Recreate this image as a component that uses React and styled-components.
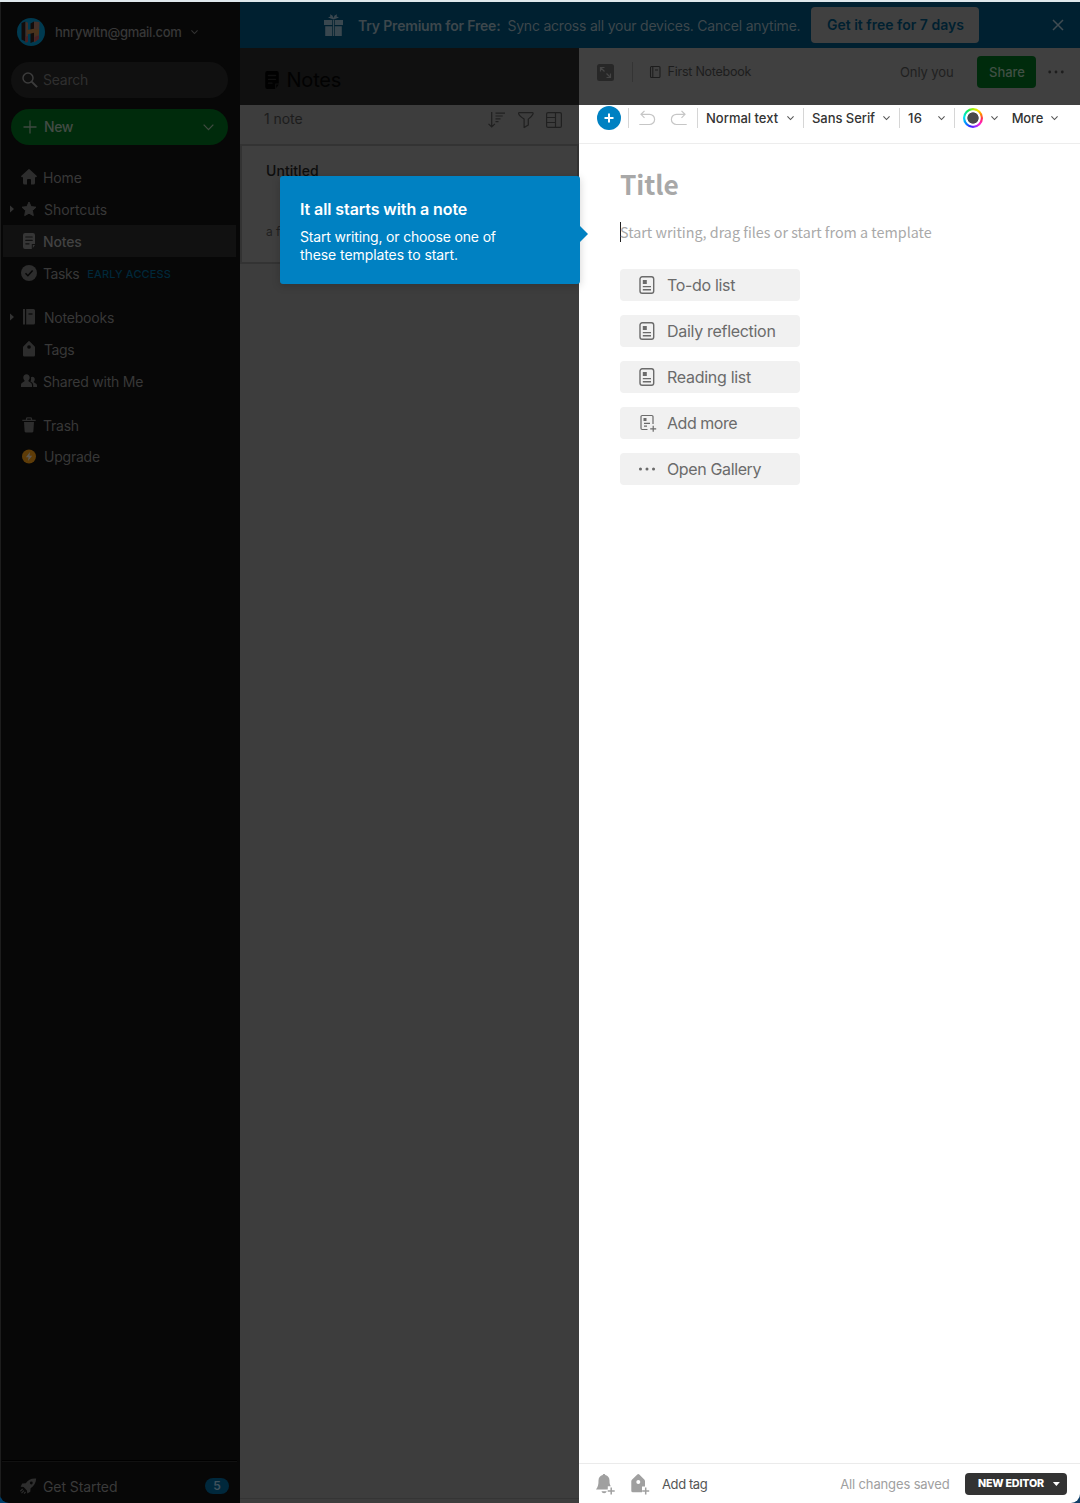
import React from "react";
import styled, { createGlobalStyle } from "styled-components";

const Global = createGlobalStyle`
  * { box-sizing: border-box; }
  body { margin: 0; font-family: Inter, "Liberation Sans", sans-serif; }
`;

const Text = styled.span`
  display: block;
  flex: none;
  font-family: Inter, "Liberation Sans", sans-serif;
  font-size: ${(p) => p.$size || 14}px;
  font-weight: ${(p) => p.$weight || 400};
  line-height: ${(p) => p.$line || 18}px;
  letter-spacing: ${(p) => p.$ls || 0}px;
  color: ${(p) => p.$color || "#3a3a3a"};
  white-space: pre;
`;

const Icon = styled.svg`
  display: block;
  flex: none;
  width: ${(p) => p.$w || 16}px;
  height: ${(p) => p.$h || p.$w || 16}px;
  overflow: visible;
`;

/* ---------- window ---------- */
const Desktop = styled.div`
  width: 1080px;
  height: 1503px;
  background: linear-gradient(90deg, #003f6b 50%, #103f68 50%);
`;
const Window = styled.div`
  display: flex;
  height: 100%;
  border-top: 2px solid #dfe8ec;
  border-radius: 0 0 9px 9px;
  overflow: hidden;
  position: relative;
`;

/* ---------- sidebar ---------- */
const Sidebar = styled.aside`
  display: flex;
  flex-direction: column;
  width: 240px;
  flex: none;
  background: #070707;
  border-left: 1px solid #1d1d1d;
`;
const Account = styled.div`
  display: flex;
  align-items: center;
  height: 60px;
  padding: 0 0 0 16px;
`;
const AccountName = styled(Text)`
  margin: 0 9px 0 10px;
`;
const Pill = styled.div`
  display: flex;
  align-items: center;
  width: 217px;
  height: 36px;
  margin: 0 0 ${(p) => p.$gap}px 10px;
  padding: 0 14px 0 11px;
  border-radius: 18px;
  background: ${(p) => p.$bg};
`;
const PillLabel = styled(Text)`
  flex: 1;
  margin-left: ${(p) => p.$ml}px;
`;
const NavGroup = styled.nav`
  display: flex;
  flex-direction: column;
  margin: 0 4px 12px 2px;
`;
const NavRow = styled.div`
  display: flex;
  align-items: center;
  height: ${(p) => p.$h || 32}px;
  padding-left: 6.5px;
  background: ${(p) => (p.$active ? "#111" : "transparent")};
`;
const Disclosure = styled.span`
  width: 4.5px;
  height: 8px;
  flex: none;
  background: ${(p) => (p.$show ? "#333" : "transparent")};
  clip-path: polygon(0 0, 100% 50%, 0 100%);
  margin-right: 7px;
`;
const NavLabel = styled(Text)`
  margin-left: ${(p) => p.$ml || 6}px;
  padding-top: 2px;
`;
const SideFooter = styled.div`
  display: flex;
  align-items: center;
  height: 43px;
  margin: auto 3px 0 1px;
  padding: 7px 8px 0 17px;
  border-top: 1px solid #000;
  box-shadow: inset 0 1px 0 #111;
`;
const Badge = styled.div`
  display: flex;
  align-items: center;
  justify-content: center;
  width: 24px;
  height: 16px;
  margin-left: auto;
  border-radius: 8px;
  background: #00283c;
`;

/* ---------- right side ---------- */
const Main = styled.div`
  display: flex;
  flex-direction: column;
  flex: 1;
`;
const Banner = styled.div`
  display: flex;
  align-items: center;
  height: 46px;
  flex: none;
  padding: 0 16px 0 84px;
  background: #002030;
`;
const BannerLead = styled(Text)`
  margin: 2px 7px 0 15px;
`;
const BannerText = styled(Text)`
  width: 293px;
  margin: 2px 11px 0 0;
`;
const Trial = styled.button`
  display: flex;
  align-items: center;
  justify-content: center;
  width: 168px;
  height: 36px;
  padding: 0;
  border: 0;
  border-radius: 4px;
  background: #404040;
`;
const CloseWrap = styled.div`
  margin-left: auto;
`;
const Panes = styled.div`
  display: flex;
  flex: 1;
`;

/* ---------- note list ---------- */
const ListPane = styled.section`
  display: flex;
  flex-direction: column;
  width: 339px;
  background: #3d3d3d;
`;
const ListHeader = styled.header`
  display: flex;
  align-items: center;
  height: 57px;
  padding: 7px 0 0 23px;
  background: #101010;
`;
const ListTitle = styled(Text)`
  margin: 0 0 0 5.5px;
`;
const ListBar = styled.div`
  display: flex;
  align-items: center;
  height: 39px;
  padding: 0 17px 9px 24px;
`;
const ListCount = styled(Text)`
  padding-bottom: 2px;
`;
const ListTools = styled.div`
  display: flex;
  align-items: center;
  gap: 12.5px;
  margin-left: auto;
`;
const Card = styled.article`
  display: flex;
  flex-direction: column;
  justify-content: space-between;
  height: 120px;
  padding: 16px 24px 21px;
  border: 2px solid #333;
  background: #3f3f3f;
`;
const ListEnd = styled.div`
  height: 5px;
  margin-top: auto;
  border-top: 1px solid #353535;
`;

/* ---------- editor ---------- */
const Editor = styled.section`
  display: flex;
  flex-direction: column;
  flex: 1;
  background: #fff;
`;
const EditorHeader = styled.header`
  display: flex;
  align-items: center;
  height: 57px;
  padding: 0 16px 9px 18px;
  background: #404040;
`;
const Divider = styled.span`
  width: 1px;
  height: 20px;
  margin: 0 17px 0 18px;
  background: #343434;
`;
const Share = styled.button`
  display: flex;
  align-items: center;
  justify-content: center;
  width: 59px;
  height: 32px;
  margin: 0 12px 0 23.5px;
  padding: 0 0 0 1px;
  border: 0;
  border-radius: 4px;
  background: #002b0c;
`;
const NotebookName = styled(Text)`
  flex: 1;
  margin-left: 6.5px;
`;
const Toolbar = styled.div`
  display: flex;
  align-items: flex-start;
  height: 39px;
  padding: 1px 0 0 18px;
  border-bottom: 1px solid #ededed;
`;
const AddButton = styled.div`
  display: flex;
  align-items: center;
  justify-content: center;
  width: 24px;
  height: 24px;
  margin-right: 7px;
  border-radius: 50%;
  background: #0081c2;
`;
const ToolGroup = styled.div`
  display: flex;
  align-items: center;
  justify-content: space-between;
  width: ${(p) => p.$w}px;
  height: 20px;
  margin-top: 2px;
  padding: 0 ${(p) => p.$pr || 9}px 0 ${(p) => p.$pl || 8}px;
  border-left: 1px solid #d6d6d6;
`;
const ColorWheel = styled.span`
  display: flex;
  width: 20px;
  height: 20px;
  border-radius: 50%;
  background: radial-gradient(circle, #4a4a4a 0 5.3px, #fff 6px 7.3px, transparent 8.1px),
    conic-gradient(#a6f000, #ffe600 35deg, #ff8a00 65deg, #ff2a5a 95deg, #ff1fd0 130deg, #a030ff 160deg, #3a1fff 195deg, #0090ff 235deg, #00e5f0 275deg, #10e860 325deg, #a6f000);
`;
const More = styled(Text)`
  margin-left: 5px;
`;
const Page = styled.div`
  display: flex;
  flex-direction: column;
  flex: 1;
  padding: 18px 0 0 41px;
`;
const Title = styled.h1`
  margin: 0;
  font: 700 26.3px/44px "Noto Sans CJK SC", sans-serif;
  letter-spacing: -0.1px;
  color: #a8a8a8;
`;
const Placeholder = styled.p`
  width: max-content;
  height: 20px;
  margin: 16px 0 27px;
  font: 400 14.33px/20px "Noto Sans CJK SC", sans-serif;
  color: #a9a9a9;
  box-shadow: inset 1px 0 0 #222;
`;
const Templates = styled.div`
  display: flex;
  flex-direction: column;
  gap: 14px;
`;
const Template = styled.button`
  display: flex;
  align-items: center;
  gap: 11px;
  width: 180px;
  height: 32px;
  padding: 0 0 0 18px;
  border: 0;
  border-radius: 4px;
  background: #f1f1f1;
`;
const Footer = styled.footer`
  display: flex;
  align-items: center;
  height: 40px;
  padding: 1px 13px 0 17px;
  border-top: 1px solid #ebebeb;
`;
const FooterTag = styled(Text)`
  flex: 1;
  margin-left: 11px;
`;
const FooterIcons = styled.div`
  display: flex;
  gap: 15px;
`;
const NewEditor = styled.button`
  display: flex;
  align-items: center;
  gap: 9px;
  width: 102px;
  height: 22px;
  margin-left: 15.5px;
  padding: 0 0 0 13px;
  border: 0;
  border-radius: 4px;
  background: #333;
`;
const Caret = styled.span`
  width: 7px;
  height: 4px;
  background: #fff;
  clip-path: polygon(0 0, 100% 0, 50% 100%);
`;

/* ---------- tooltip ---------- */
const Tip = styled.div`
  position: absolute;
  left: 280px;
  top: 174px;
  width: 300px;
  height: 108px;
  padding: 23px 20px;
  border-radius: 3px;
  background: #0081c2;
  box-shadow: 0 2px 8px rgba(0, 0, 0, 0.18);
  &::after {
    content: "";
    position: absolute;
    left: 100%;
    top: 50px;
    width: 8px;
    height: 16px;
    background: #0081c2;
    clip-path: polygon(0 0, 100% 50%, 0 100%);
  }
`;
const TipTitle = styled(Text)`
  margin-bottom: 9px;
`;

/* ---------- icons ---------- */
const G = "#2d2d2d";
const Chevron = ({ w = 7, c = "#555", sw = 1.1 }) => (
  <Icon $w={w} $h={w * 0.6} viewBox="0 0 10 6" fill="none" stroke={c} strokeWidth={(sw * 10) / w}>
    <path d="M.6.6 5 5.1 9.4.6" />
  </Icon>
);
const NoteIcon = ({ w = 16, c = G, line = "#111" }) => (
  <Icon $w={w} viewBox="0 0 16 16">
    <path fill={c} d="M4 0h8a2 2 0 0 1 2 2v9h-3.2v5H4a2 2 0 0 1-2-2V2a2 2 0 0 1 2-2z" />
    <path fill={c} d="M11.8 12H14l-2.2 3z" />
    <path stroke={line} strokeWidth="1.2" strokeLinecap="round" d="M4.8 4h6.4M4.8 7.4h6.4M4.8 10.8h3.2" />
  </Icon>
);
const icons = {
  home: (
    <Icon viewBox="0 0 16 16">
      <path fill={G} d="M7.2.4a1.2 1.2 0 0 1 1.6 0l6.8 6.3c.6.6.2 1.5-.6 1.5h-1V14a1.6 1.6 0 0 1-1.6 1.6H10V11a1 1 0 0 0-1-1H7a1 1 0 0 0-1 1v4.600H3.600A1.600 1.600 0 0 1 2 14V8.200H1c-.8 0-1.200-.9-.6-1.500z" />
    </Icon>
  ),
  star: (
    <Icon viewBox="0 0 16 16">
      <path fill={G} stroke={G} strokeWidth="1" strokeLinejoin="round" d="m8 1 2.100 4.600 4.900.6-3.600 3.400.9 5L8 12.200l-4.300 2.400.9-5L1 6.200l4.900-.6z" />
    </Icon>
  ),
  notes: <NoteIcon c="#363636" />,
  tasks: (
    <Icon viewBox="0 0 16 16">
      <circle cx="8" cy="8" r="8" fill={G} />
      <path d="m4.500 8.200 2.400 2.500 4.700-5.300" fill="none" stroke="#070707" strokeWidth="1.500" />
    </Icon>
  ),
  notebooks: (
    <Icon viewBox="0 0 16 16">
      <path fill={G} d="M2 0h2v15.500H2zM5.200 0H12.500A1.500 1.500 0 0 1 14 1.500V14a1.500 1.500 0 0 1-1.500 1.500H5.200z" />
      <path stroke="#070707" strokeWidth="1.200" d="M7.500 5h4" />
    </Icon>
  ),
  tags: (
    <Icon viewBox="0 0 16 16">
      <path fill={G} d="M7.200.4a1.100 1.100 0 0 1 1.600 0l4.700 4.800c.3.400.5.800.5 1.300v7.800a1.300 1.300 0 0 1-1.300 1.300H3.300A1.300 1.300 0 0 1 2 14.300V6.500c0-.5.2-.9.500-1.300z" />
      <circle cx="8" cy="6" r="1.800" fill="#070707" />
    </Icon>
  ),
  shared: (
    <Icon viewBox="0 0 16 16">
      <path fill={G} d="M5.500 1.200c2 0 3.200 1.400 3.200 3.200 0 1.400-.6 2.500-1.300 3.200-.4 1.500 3.600 1.600 3.600 4.400V14H0v-2c0-2.800 4-2.900 3.600-4.400C2.900 6.900 2.300 5.800 2.300 4.400c0-1.800 1.200-3.200 3.200-3.200z" />
      <path fill={G} d="M11.300 3.700c1.500 0 2.500 1.100 2.500 2.600 0 1-.5 1.900-1 2.500-.3 1.300 3.200 1.300 3.200 3.600V14h-3.800v-2c0-2-1.600-3-2.800-3.600.5-.8.7-1.600.7-2.700 0-.5-.1-1-.2-1.400.4-.4.900-.6 1.400-.6z" />
    </Icon>
  ),
  trash: (
    <Icon viewBox="0 0 16 16">
      <path fill={G} d="M3 5h10l-.6 9.200a1.500 1.500 0 0 1-1.500 1.400H5.100a1.500 1.500 0 0 1-1.500-1.400z" />
      <path d="M1.300 3.300h13.400M5.500 3V1.800A1 1 0 0 1 6.500.9h3a1 1 0 0 1 1 .9V3" fill="none" stroke={G} strokeWidth="1.300" />
    </Icon>
  ),
  upgrade: (
    <Icon viewBox="0 0 16 16">
      <circle cx="8" cy="8.500" r="7" fill="#5e3c08" />
      <path fill="#5c5852" d="M9 4 4.900 9.200h2.600l-.5 3.900 4.200-5.400H8.500z" />
    </Icon>
  ),
};
const Avatar = () => (
  <Icon $w={28} viewBox="0 0 28 28">
    <circle cx="14" cy="14" r="14" fill="#003a50" />
    <path fill="#120c0b" d="m4.500 5 4-1.500v20l-4-2zM13.500 5.500l3.500-2v20l-3.500 1.500z" />
    <path fill="#43302a" d="m8.500 3.500 2.500 1.200v19l-2.500 1zM17 3.500l5.500.6-.6 17L17 24.500z" />
    <path fill="#4a331c" d="m10 12 8-1.500v4L10 16.500zM17.500 12l4.500-1v5l-4.500 2z" />
    <path fill="#472024" d="m17.500 19 4.400-1.500v3.600l-4.400 2.800zM8.500 19l2.500-1v5.500l-2.500 1z" />
  </Icon>
);
const TemplateIcon = () => (
  <Icon $w={18} viewBox="0 0 18 18" fill="none" stroke="#6b6b6b" strokeWidth="1.400">
    <rect x="2" y=".8" width="13.700" height="16.500" rx="2.200" />
    <path d="M4.800 10.600h8.200M4.800 13.700h8.200" />
    <path fill="#6b6b6b" stroke="none" d="M4.800 4h4v4h-4z" />
  </Icon>
);
const AddTemplateIcon = () => (
  <Icon $w={18} viewBox="0 0 18 18" fill="none" stroke="#6b6b6b" strokeWidth="1.200">
    <path d="M9.500 15.500H4.200a1.200 1.200 0 0 1-1.200-1.200V2.700a1.200 1.200 0 0 1 1.200-1.200h9.600A1.200 1.200 0 0 1 15 2.700V10M6 9.300h6M6 12.200h3M15.200 11.800v6M12.200 14.800h6" />
    <path fill="#6b6b6b" stroke="none" d="M5.500 4h3v3h-3z" />
  </Icon>
);
const Dots = ({ c, w = 16, r = 1.400, e = 1.700 }) => (
  <Icon $w={w} viewBox="0 0 16 16" fill={c}>
    <circle cx={e} cy="8" r={r} /><circle cx="8" cy="8" r={r} /><circle cx={16 - e} cy="8" r={r} />
  </Icon>
);

const nav = [
  [
    { k: "home", t: "Home", ls: -0.1 },
    { k: "star", t: "Shortcuts", ls: -0.06, ml: 7, open: true },
    { k: "notes", t: "Notes", ls: -0.17, active: true },
    { k: "tasks", t: "Tasks", ls: -0.4, early: true },
  ],
  [
    { k: "notebooks", t: "Notebooks", ls: -0.2, ml: 7, open: true },
    { k: "tags", t: "Tags", ls: -0.4, ml: 7 },
    { k: "shared", t: "Shared with Me", ls: -0.22 },
  ],
  [
    { k: "trash", t: "Trash", ls: -0.25, h: 31 },
    { k: "upgrade", t: "Upgrade", ls: -0.22, ml: 7 },
  ],
];
const templates = [
  ["To-do list", -0.32, <TemplateIcon />],
  ["Daily reflection", -0.3, <TemplateIcon />],
  ["Reading list", -0.29, <TemplateIcon />],
  ["Add more", -0.46, <AddTemplateIcon />],
  ["Open Gallery", -0.37, <Dots w={18} c="#6b6b6b" r={1.350} e={2.200} />],
];

export default function App() {
  return (
    <Desktop>
      <Global />
      <Window>
        <Sidebar>
          <Account>
            <Avatar />
            <AccountName $size={13} $ls={-0.3} $weight={500} $color="#383838">hnrywltn@gmail.com</AccountName>
            <Chevron c="#333" />
          </Account>
          <Pill $gap={11} $bg="#101010">
            <Icon viewBox="0 0 16 16" fill="none" stroke="#3c3c3c" strokeWidth="1.500">
              <circle cx="6" cy="6" r="5" /><path d="m9.600 9.600 5.500 5.500" strokeWidth="2" />
            </Icon>
            <PillLabel $ml={5} $ls={-0.245} $color="#2f2f2f">Search</PillLabel>
          </Pill>
          <Pill $gap={16} $bg="#002b0c">
            <Icon viewBox="0 0 16 16" stroke="#3e4a40" strokeWidth="1.300"><path d="M8 1.500v13M1.500 8h13" /></Icon>
            <PillLabel $ml={6} $weight={500} $ls={-0.45} $color="#434b45">New</PillLabel>
            <Chevron w={11} c="#3e4a40" sw={1.300} />
          </Pill>
          {nav.map((g, i) => (
            <NavGroup key={i}>
              {g.map((n) => (
                <NavRow key={n.t} $active={n.active} $h={n.h}>
                  <Disclosure $show={n.open} />
                  {icons[n.k]}
                  <NavLabel $ml={n.ml} $ls={n.ls} $weight={n.active ? 500 : 400} $color={n.active ? "#424242" : "#383838"}>{n.t}</NavLabel>
                  {n.early && <NavLabel $ml={8} $size={11} $weight={500} $ls={0.12} $color="#00283a">EARLY ACCESS</NavLabel>}
                </NavRow>
              ))}
            </NavGroup>
          ))}
          <SideFooter>
            <Icon $w={18} viewBox="0 0 18 18">
              <path fill={G} d="M17.200 1.500C12.500 1 9 3 6.800 6.200L3.200 6.500 1.600 9.700l3 .3 3.300 3.400.4 3.100 3-1.800.3-3.500c3.200-2.200 5.400-5.200 5.600-9.700z" />
              <circle cx="12.300" cy="6" r="1.400" fill="#070707" />
              <path d="m3.700 12-2.400 2.200M5 13.600l-2.500 2.600M6.500 15l-1.400 1.600" stroke={G} strokeWidth="1.200" />
            </Icon>
            <NavLabel $ls={-0.08}>Get Started</NavLabel>
            <Badge><Text $size={12} $weight={600} $color="#40525c">5</Text></Badge>
          </SideFooter>
        </Sidebar>

        <Main>
          <Banner>
            <Icon $w={19} $h={22} viewBox="0 0 19 22">
              <path fill="#39474f" d="M0 6h8.200v5H0zM10.800 6H19v5h-8.200zM1.200 12.300h7v9.700h-7zM10.800 12.300h7V22h-7zM8.900 6h1.200v16H8.900z" />
              <path fill="#39474f" d="M9.500 5.600 4 3.600 6.400 2.600 6 .2l2.400 1.400L9.500 4l1.100-2.400L13 .2l-.4 2.400 2.400 1z" />
            </Icon>
            <BannerLead $weight={600} $ls={-0.19} $color="#3d474c">Try Premium for Free:</BannerLead>
            <BannerText $ls={-0.215} $color="#3d474c">Sync across all your devices. Cancel anytime.</BannerText>
            <Trial><Text $weight={600} $ls={0} $color="#002030">Get it free for 7 days</Text></Trial>
            <CloseWrap>
              <Icon $w={12} viewBox="0 0 12 12" stroke="#404c52" strokeWidth="1.500"><path d="m1 1 10 10M11 1 1 11" /></Icon>
            </CloseWrap>
          </Banner>
          <Panes>
            <ListPane>
              <ListHeader>
                <NoteIcon w={18} c="#010101" line="#101010" />
                <ListTitle $size={20} $line={24} $ls={-0.2} $color="#020202">Notes</ListTitle>
              </ListHeader>
              <ListBar>
                <ListCount $ls={-0.05} $color="#1c1c1c">1 note</ListCount>
                <ListTools>
                  <Icon $w={17} $h={16} viewBox="0 0 17 16" fill="none" stroke="#202020" strokeWidth="1.200">
                    <path d="M3.700 0v15M.5 11.800l3.200 3.200 3.200-3.200M7.500 1.200H17M7.500 4h7.200M7.500 6.800h5M7.500 9.600h3" />
                  </Icon>
                  <Icon $w={16} viewBox="0 0 16 16" fill="none" stroke="#202020" strokeWidth="1.200" strokeLinejoin="round">
                    <path d="M1.200.7h13.200c.7 0 .9.600.6 1.200-.8 1.900-2.400 3.400-4.700 5.200v5.800l-4.200 2.600V7.100C3.600 5.300 1.600 3.800.7 1.900.4 1.300.6.7 1.200.7z" />
                  </Icon>
                  <Icon $w={16} viewBox="0 0 16 16" fill="none" stroke="#202020" strokeWidth="1.200">
                    <rect x=".6" y=".6" width="14.800" height="14.800" rx="1.500" /><path d="M9.500.6v14.800M.6 5.500h8.900M.6 10.500h8.900" />
                  </Icon>
                </ListTools>
              </ListBar>
              <Card>
                <Text $weight={500} $ls={0.05} $color="#0d0d0d">Untitled</Text>
                <Text $size={12} $color="#1f1f1f">a f</Text>
              </Card>
              <ListEnd />
            </ListPane>

            <Editor>
              <EditorHeader>
                <Icon $w={17} viewBox="0 0 17 17">
                  <rect width="17" height="17" rx="2.500" fill="#272727" />
                  <path d="M3.500 7.500v-4h4M3.500 3.500l4 4M13.500 9.500v4h-4M13.500 13.500l-4-4" fill="none" stroke="#454545" strokeWidth="1.200" />
                </Icon>
                <Divider />
                <Icon $w={11} $h={12} viewBox="0 0 11 12" fill="none" stroke="#1d1d1d" strokeWidth="1.100">
                  <rect x=".5" y=".5" width="9.500" height="11" rx="1" /><path d="M2.800.5v11M5 4h3" />
                </Icon>
                <NotebookName $size={12.5} $ls={-0.24} $color="#1d1d1d">First Notebook</NotebookName>
                <Text $size={13} $ls={-0.1} $color="#1f1f1f">Only you</Text>
                <Share><Text $size={13} $weight={500} $color="#405045">Share</Text></Share>
                <Dots c="#1d1d1d" />
              </EditorHeader>
              <Toolbar>
                <AddButton>
                  <Icon $w={10} viewBox="0 0 10 10" stroke="#fff" strokeWidth="2"><path d="M5 .5v9M.5 5h9" /></Icon>
                </AddButton>
                <ToolGroup $w={69} $pl={10} $pr={10}>
                  <Icon $w={16} viewBox="0 0 16 16" fill="none" stroke="#c6c6c6" strokeWidth="1.200">
                    <path d="M5.500.8 2 4.300l3.500 3.500M2 4.300h8.500a5 5 0 0 1 0 10.200H.3" />
                  </Icon>
                  <Icon $w={16} viewBox="0 0 16 16" fill="none" stroke="#c6c6c6" strokeWidth="1.200">
                    <path d="M10.500.8 14 4.300l-3.500 3.500M14 4.300H5.500a5 5 0 0 0 0 10.200h10.200" />
                  </Icon>
                </ToolGroup>
                <ToolGroup $w={106}><Text $size={13} $weight={500} $color="#333">Normal text</Text><Chevron /></ToolGroup>
                <ToolGroup $w={96}><Text $size={13} $weight={500} $ls={-0.05} $color="#333">Sans Serif</Text><Chevron /></ToolGroup>
                <ToolGroup $w={55}><Text $size={13} $weight={500} $ls={0.4} $color="#333">16</Text><Chevron /></ToolGroup>
                <ToolGroup $w={126} $pr={21.5}>
                  <ColorWheel />
                  <Chevron />
                  <More $size={13} $weight={500} $ls={-0.15} $color="#333">More</More>
                  <Chevron />
                </ToolGroup>
              </Toolbar>
              <Page>
                <Title>Title</Title>
                <Placeholder>Start writing, drag files or start from a template</Placeholder>
                <Templates>
                  {templates.map(([t, ls, ic]) => (
                    <Template key={t}>{ic}<Text $size={16} $line={20} $ls={ls} $color="#6b6b6b">{t}</Text></Template>
                  ))}
                </Templates>
              </Page>
              <Footer>
                <FooterIcons>
                  <Icon $w={20} viewBox="0 0 20 20">
                    <path fill="#a0a0a0" d="M8 0c.8 0 1.200.5 1.300 1.100C12 1.700 13.500 4 13.500 6.500c0 2.500.3 4.200 1.300 5.800h-3v3.200H0c2-2.500 2.500-5 2.500-9C2.500 4 4 1.700 6.700 1.100 6.800.5 7.200 0 8 0zM5.500 17.300h5.200c-.3 1.300-1.300 2-2.600 2s-2.300-.7-2.600-2z" />
                    <path stroke="#a0a0a0" strokeWidth="1.500" d="M15.200 13.500v7M11.700 17h7" />
                  </Icon>
                  <Icon $w={20} viewBox="0 0 20 20">
                    <path fill="#a0a0a0" d="M6.300.5a1.300 1.300 0 0 1 2 0l5.200 5.300c.3.400.5.900.5 1.400v5.300h-3v5.800H1.800A1.500 1.500 0 0 1 .3 16.800V7.200c0-.5.2-1 .6-1.400z" />
                    <circle cx="7.300" cy="8" r="2" fill="#fff" />
                    <path stroke="#a0a0a0" strokeWidth="1.500" d="M14.700 13.500v7M11.200 17h7" />
                  </Icon>
                </FooterIcons>
                <FooterTag $size={13} $ls={-0.4} $color="#555">Add tag</FooterTag>
                <Text $size={13} $ls={-0.14} $color="#a0a0a0">All changes saved</Text>
                <NewEditor><Text $size={10.7} $weight={800} $ls={-0.2} $color="#fff">NEW EDITOR</Text><Caret /></NewEditor>
              </Footer>
            </Editor>
          </Panes>
        </Main>
        <Tip>
          <TipTitle $size={16} $weight={600} $line={20} $ls={-0.09} $color="#fff">It all starts with a note</TipTitle>
          <Text $ls={-0.17} $color="#fff">Start writing, or choose one of</Text>
          <Text $ls={-0.08} $color="#fff">these templates to start.</Text>
        </Tip>
      </Window>
    </Desktop>
  );
}
